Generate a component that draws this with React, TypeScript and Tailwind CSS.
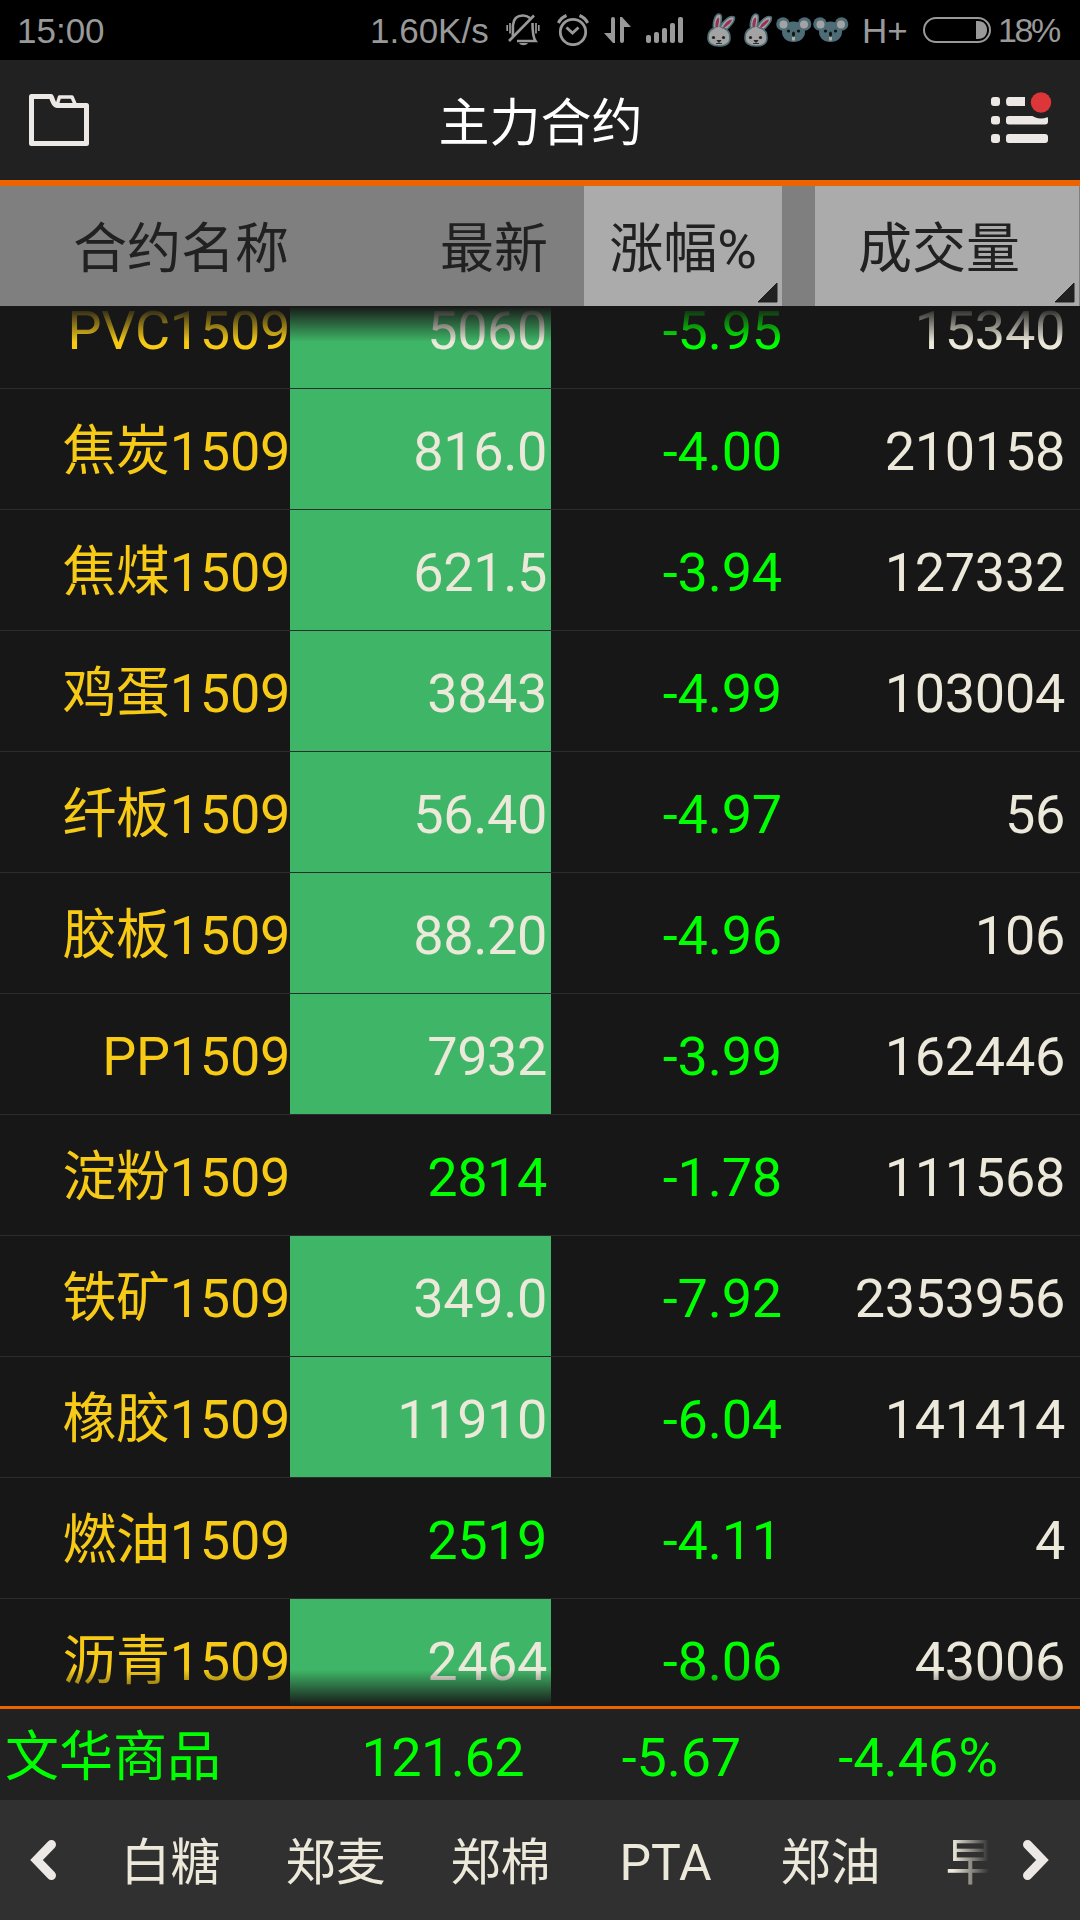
import React from 'react';

type Contract = {
  name: string;
  last: string;
  change: string;
  volume: string;
  highlight: boolean;
};

const contracts: Contract[] = [
  { name: 'PVC1509', last: '5060', change: '-5.95', volume: '15340', highlight: true },
  { name: '焦炭1509', last: '816.0', change: '-4.00', volume: '210158', highlight: true },
  { name: '焦煤1509', last: '621.5', change: '-3.94', volume: '127332', highlight: true },
  { name: '鸡蛋1509', last: '3843', change: '-4.99', volume: '103004', highlight: true },
  { name: '纤板1509', last: '56.40', change: '-4.97', volume: '56', highlight: true },
  { name: '胶板1509', last: '88.20', change: '-4.96', volume: '106', highlight: true },
  { name: 'PP1509', last: '7932', change: '-3.99', volume: '162446', highlight: true },
  { name: '淀粉1509', last: '2814', change: '-1.78', volume: '111568', highlight: false },
  { name: '铁矿1509', last: '349.0', change: '-7.92', volume: '2353956', highlight: true },
  { name: '橡胶1509', last: '11910', change: '-6.04', volume: '141414', highlight: true },
  { name: '燃油1509', last: '2519', change: '-4.11', volume: '4', highlight: false },
  { name: '沥青1509', last: '2464', change: '-8.06', volume: '43006', highlight: true },
];

const tabs = ['白糖', '郑麦', '郑棉', 'PTA', '郑油', '早籼'];

const MutedBell = () => (
  <svg width="34" height="32" viewBox="0 0 34 32" fill="none" stroke="#999" strokeWidth="2.6">
    <path d="M6.500 22C7.500 19 6.500 15 7 11C7.500 5 11 1.500 17 1.500C20 1.500 22 2.500 24 4" />
    <path d="M11 27H29.500C27.500 24 26.500 21 26.500 9" />
    <path d="M28 1.500L3 27" />
    <path d="M1.200 11V17M4 9V19.500M30 9V19.500M32.800 11V17" strokeWidth="1.700" />
    <path d="M13 29H22C20 32 15 32 13 29Z" fill="#999" stroke="none" />
  </svg>
);

const Alarm = () => (
  <svg width="32" height="32" viewBox="0 0 32 32" fill="none" stroke="#999" strokeWidth="2.800">
    <circle cx="16" cy="18" r="12.700" />
    <path d="M9.500 13.500L15.500 19L21.500 13.500" />
    <path d="M1.300 9C3 5.500 6 3 9.500 1.500M30.700 9C29 5.500 26 3 22.500 1.500" strokeWidth="3" />
  </svg>
);

const DataArrows = () => (
  <svg width="28" height="26" viewBox="0 0 28 26" fill="#999">
    <path d="M7 2Q7 0 9 0Q11 0 11 2V26H9L0 16H7Z" />
    <path d="M16 0H18L27 10H20V24Q20 26 18 26Q16 26 16 24Z" />
  </svg>
);

const Signal = () => (
  <svg width="37" height="26" viewBox="0 0 37 26" fill="#999">
    <rect x="0" y="18" width="5" height="8" rx="2" />
    <rect x="8" y="15" width="5" height="11" rx="2" />
    <rect x="16" y="11" width="5" height="15" rx="2" />
    <rect x="24" y="6" width="5" height="20" rx="2" />
    <rect x="32" y="0" width="5" height="26" rx="2" />
  </svg>
);

const Rabbit = () => (
  <svg width="29" height="34" viewBox="0 0 29 34">
    <g fill="#a3a3a3" stroke="#4d6c76" strokeWidth="1.600">
      <path d="M7 17C5 10 8 1 12 1C16 1 14 9 13 14C17 7 23 2 27 4C29 7 23 14 18 18Z" />
      <path d="M1 25C1 18 5 14.500 12 14.500C19 14.500 23 18 23 25C23 30 19 33 12 33C5 33 1 30 1 25Z" />
    </g>
    <path d="M7 17C7 15 10 14 13 14L18 18L14 20H8Z" fill="#a3a3a3" />
    <path d="M8.500 14C8 10 9.500 5 11.500 4.500C13 5 11.500 11 11 14ZM16 14C18 10 22 6.500 25 6.500C24.500 10 20 13 17 15Z" fill="#973157" />
    <circle cx="6.500" cy="24.500" r="1.600" fill="#222" />
    <circle cx="16.500" cy="24.500" r="1.600" fill="#222" />
    <path d="M10 27.500H14L12 29.500ZM9 30.500H15" fill="#222" stroke="#222" strokeWidth="0.900" />
  </svg>
);

const Koala = () => (
  <svg width="36" height="26" viewBox="0 0 36 26">
    <circle cx="7" cy="7" r="6.800" fill="#4d6c76" />
    <circle cx="28.500" cy="7" r="6.800" fill="#4d6c76" />
    <path d="M6 15C6 8 11 4.500 17.500 4.500C24 4.500 29 8 29 15C29 21 24 25 17.500 25C11 25 6 21 6 15Z" fill="#4d6c76" />
    <circle cx="7.500" cy="7.500" r="4" fill="#a3a3a3" />
    <circle cx="28" cy="7.500" r="4" fill="#a3a3a3" />
    <ellipse cx="17.500" cy="17" rx="1.500" ry="2.500" fill="#111" />
    <circle cx="12.500" cy="14" r="1.600" fill="#111" />
    <circle cx="22.500" cy="14" r="1.600" fill="#111" />
    <rect x="16" y="20" width="3" height="3.500" fill="#b5aaa0" />
  </svg>
);

const Battery = () => (
  <svg width="68" height="26" viewBox="0 0 68 26">
    <rect x="1" y="1" width="66" height="24" rx="12" fill="none" stroke="#999" strokeWidth="2" />
    <path d="M53 4H55C61 4 64 8 64 13C64 18 61 22 55 22H53Z" fill="#999" />
  </svg>
);

const StatusBar = () => (
  <div className="flex h-[60px] items-center bg-black pl-[17px] font-['Liberation_Sans',sans-serif] text-[35px] leading-none text-[#999]">
    <span className="w-[353px]">15:00</span>
    <span className="w-[136px]">1.60K/s</span>
    <MutedBell />
    <div className="ml-[17px]"><Alarm /></div>
    <div className="ml-[15px]"><DataArrows /></div>
    <div className="ml-[14px]"><Signal /></div>
    <div className="ml-6 flex items-center">
      <Rabbit />
      <div className="ml-2"><Rabbit /></div>
      <div className="ml-[3px]"><Koala /></div>
      <div className="ml-px"><Koala /></div>
    </div>
    <span className="ml-[13px] w-[61px]">H+</span>
    <Battery />
    <span className="ml-[7px] text-[34px] tracking-[-2.400px]">18%</span>
  </div>
);

const Header = () => (
  <header className="flex h-[126px] items-center justify-between border-b-6 border-[#eb6400] bg-[#212121] pr-[18px] pl-[29px]">
    <svg width="61" height="52" viewBox="0 0 61 52" fill="none" stroke="#ece8e6" strokeWidth="5" strokeLinejoin="round">
      <path d="M2.500 2.500H22C24 6 24.500 11.500 28 11.500H57.500V49.500H2.500Z" />
      <path d="M28 11L30.500 3H43L46.500 11" strokeWidth="3.500" />
    </svg>
    <h1 className="pt-[6px] text-[51px] leading-none text-white">主力合约</h1>
    <svg width="71" height="56" viewBox="0 0 71 56" fill="#ece8e6">
      <rect x="0" y="5" width="9" height="9" rx="3" />
      <path d="M18 5H34V14H18Q15 14 15 9.500Q15 5 18 5Z" />
      <rect x="0" y="24" width="9" height="8.500" rx="3" />
      <rect x="15" y="24" width="42" height="8.500" rx="3" />
      <rect x="0" y="42" width="9" height="9" rx="3" />
      <rect x="15" y="42" width="42" height="9" rx="3" />
      <circle cx="50" cy="10.500" r="16" fill="#212121" />
      <circle cx="50" cy="10.500" r="10.200" fill="#dc3638" />
    </svg>
  </header>
);

const SortMark = () => (
  <svg className="absolute right-1 bottom-[3px]" width="21" height="21" viewBox="0 0 21 21">
    <path d="M20 1V20H1Z" fill="#212121" stroke="#212121" strokeLinejoin="round" />
  </svg>
);

const ColumnHeader = () => (
  <div className="flex h-[120px] bg-[#7f7f7f] text-[54px] leading-[128px] text-[#212121]">
    <div className="w-[289px] text-right">合约名称</div>
    <div className="w-[259px] text-right">最新</div>
    <div className="relative ml-9 w-[198px] bg-[#ababab] text-center">
      涨幅%
      <SortMark />
    </div>
    <div className="relative ml-[33px] w-[264px] bg-[#ababab] pr-4 text-center">
      成交量
      <SortMark />
    </div>
  </div>
);

const Row = ({ contract }: { contract: Contract }) => (
  <div className="flex h-[121px] shrink-0 border-b border-[#2d2d2d] text-right leading-[126px]">
    <div className="w-[290px] tracking-[-0.300px] text-[#f7cb15]">{contract.name}</div>
    <div
      className={`w-[261px] pr-1 tracking-[-0.400px] ${
        contract.highlight ? 'bg-[#3fb667] text-[#ece8da]' : 'text-[#00ff00]'
      }`}
    >
      {contract.last}
    </div>
    <div className="w-[231px] tracking-[-0.200px] text-[#00ff00]">{contract.change}</div>
    <div className="w-[283px] tracking-[-0.300px] text-[#ece8da]">{contract.volume}</div>
  </div>
);

const App = () => {
  return (
    <div className="flex h-[1920px] w-[1080px] flex-col overflow-hidden bg-[#171717] font-[Roboto,'Noto_Sans_CJK_SC',sans-serif]">
      <StatusBar />
      <Header />
      <ColumnHeader />

      {/* Scrolled list, faded at both ends */}
      <main className="relative flex h-[1400px] flex-col justify-start overflow-hidden text-[54px]">
        <div className="-mt-[38px] flex flex-col">
          {contracts.map((contract) => (
            <Row key={contract.name} contract={contract} />
          ))}
        </div>
        <div className="absolute inset-x-0 top-0 h-9 bg-linear-to-b from-[#171717] to-[#17171700]" />
        <div className="absolute inset-x-0 bottom-0 h-9 bg-linear-to-t from-[#171717] to-[#17171700]" />
      </main>

      {/* Index summary */}
      <div className="flex h-[94px] border-t-3 border-[#eb6400] bg-[#212121] pl-[5px] text-[54px] leading-[98px] text-[#00ff00]">
        <span className="w-[219px]">文华商品</span>
        <span className="w-[300px] text-right tracking-[-0.600px]">121.62</span>
        <span className="w-[217px] text-right tracking-[-0.200px]">-5.67</span>
        <span className="w-[257px] text-right">-4.46%</span>
      </div>

      <nav className="flex h-[120px] items-center bg-[#303030]">
        <svg className="ml-[29px]" width="31" height="44" viewBox="0 0 31 44" fill="none" stroke="#ece8e6" strokeWidth="9" strokeLinecap="round">
          <path d="M22.500 6.500L7.500 22L22.500 37.500" />
        </svg>
        <div className="relative ml-[28px] flex h-[120px] w-[901px] overflow-hidden text-[50px] leading-[126px] text-[#ece8da]">
          {tabs.map((tab) => (
            <span key={tab} className="w-[165px] shrink-0 text-center">
              {tab}
            </span>
          ))}
          <div className="absolute inset-y-0 right-0 w-9 bg-linear-to-l from-[#303030] to-[#30303000]" />
        </div>
        <svg className="ml-[30px]" width="31" height="44" viewBox="0 0 31 44" fill="none" stroke="#ece8e6" strokeWidth="9" strokeLinecap="round">
          <path d="M8.500 6.500L23.500 22L8.500 37.500" />
        </svg>
      </nav>
    </div>
  );
};

export default App;
